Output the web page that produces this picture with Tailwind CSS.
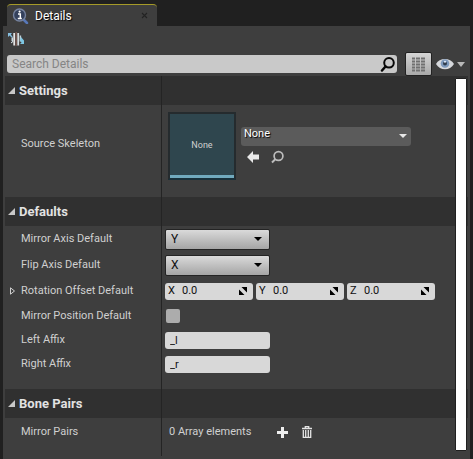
<!DOCTYPE html>
<html lang="en">
<head>
<meta charset="utf-8">
<meta name="viewport" content="width=device-width, initial-scale=1">
<title>Details</title>
<script src="https://cdn.jsdelivr.net/npm/@tailwindcss/browser@4"></script>
</head>
<body class="flex min-h-screen flex-col bg-[#202020] pl-[3px] pr-[3px] pt-1 font-['Roboto',sans-serif] text-xs text-[#d0d0d0]">
<header class="flex px-1">
  <div class="flex h-[22px] w-[150px] items-center rounded-t-sm border-t border-[#a59a28] bg-[#3e3e3e] pl-[5px] pr-2">
    <svg class="h-4 w-[17px]" viewBox="0 0 17 16" aria-hidden="true"><path d="m11 11 4 4" stroke="#5878b8" stroke-width="2.5" stroke-linecap="round"/><circle cx="7.5" cy="7" r="6" fill="#34415c" stroke="#76839f" stroke-width="1.4"/><path d="M6 6h2.3v4.3M5.8 10.5h4" fill="none" stroke="#fff" stroke-width="1.5"/><circle cx="7.6" cy="3.6" r="1.1" fill="#fff"/></svg>
    <h1 class="ml-[6px] flex-1 text-white [text-shadow:1px_1px_1px_#000]">Details</h1>
    <button aria-label="Close tab" class="flex h-4 w-2 items-center"><svg class="h-[7px] w-[7px]" viewBox="0 0 7 7"><path d="m1 1 5 5m0-5-5 5" stroke="#232323" stroke-width="1.1"/></svg></button>
  </div>
</header>
<main class="flex flex-1 flex-col bg-[#3e3e3e] px-[2px]">
  <div class="flex h-[26px] items-center pl-[3px]">
    <button aria-label="Mirror skeleton"><svg class="block h-4 w-[17px]" viewBox="0 0 17 16"><path d="M0 2h4L2.8 3.6l2 2.4L4 7 1.6 4.6 0 6Z" fill="#86bfe0"/><path d="M3.5 7.5 5 6v5l-1.5-1Z" fill="#c9d8df"/><path d="M6.2 2v12.5" stroke="#e6e6e6" stroke-width="1.8"/><path d="M8.2 1v14" stroke="#8d6258" stroke-width="1"/><path d="M10.2 2v12.5" stroke="#d5dde0" stroke-width="1.8"/><path d="M12.4 4.5v6" stroke="#bfd0d8" stroke-width="1.5"/><path d="m13 6 3 3.5V13h-4l1.5-1.5L12 9.5Z" fill="#7ec6e2"/><path d="m3 12 2-1.5" stroke="#dfe9ee"/></svg></button>
  </div>
  <div class="flex h-6 items-center pl-[2px] pr-[3px]">
    <div class="flex h-[18px] min-w-0 flex-1 items-center rounded-[3px] bg-[#c9c9c9] pl-[5px]">
      <input type="search" aria-label="Search Details" placeholder="Search Details" class="h-full min-w-0 flex-1 text-[#222] outline-none placeholder:text-[#858585]">
      <svg class="h-4 w-[18px]" viewBox="0 0 18 16" aria-hidden="true"><circle cx="10" cy="6.8" r="4.8" fill="none" stroke="#080808" stroke-width="2"/><path d="m6.5 10.5-3.5 4" stroke="#080808" stroke-width="2.5" stroke-linecap="round"/></svg>
    </div>
    <button aria-label="Property matrix" class="ml-2 flex h-6 w-[27px] items-center justify-center rounded-[2px] border border-[#222] bg-linear-to-b from-[#d5d5d5] to-[#a9a9a9]"><svg class="h-[15px] w-[15px]" viewBox="0 0 15 15"><path d="M1 1.5h3M1 4.5h3M1 7.5h3M1 10.5h3M1 13.5h3M5 1.5h4M5 4.5h4M5 7.5h4M5 10.5h4M5 13.5h4M10 1.5h4M10 4.5h4M10 7.5h4M10 10.5h4M10 13.5h4" stroke="#707070" stroke-width="1.8"/></svg></button>
    <button aria-label="View options" class="ml-1 flex items-center gap-[3px]"><svg class="h-3 w-[18px]" viewBox="0 0 18 12"><path d="M0 6C3 0 14-1 18 6 14 13 4 13 0 6Z" fill="#d6d8dc"/><circle cx="9" cy="5.5" r="4.3" fill="#7e9abd"/><circle cx="9" cy="5.5" r="2" fill="#303c4d"/><circle cx="9" cy="3.8" r="1" fill="#e8f2ff"/></svg><svg class="h-[5px] w-2" viewBox="0 0 8 5"><path d="M0 0h8L4 5Z" fill="#b8b8b8"/></svg></button>
  </div>
  <div class="relative">
    <section>
      <div class="grid h-[29px] grid-cols-[156px_1fr] bg-[#303030]">
        <h2 class="text-[13px] font-bold text-[#e2e2e2] [text-shadow:1px_1px_1px_#000]"><button aria-expanded="true" class="flex h-full items-center gap-1 pl-[3px]"><svg class="h-[7px] w-[7px]" viewBox="0 0 7 7"><path d="M7 0v7H0Z" fill="#c8c8c8"/></svg>Settings</button></h2>
        <div class="border-l border-[#242424]"></div>
      </div>
      <div class="grid h-[92px] grid-cols-[156px_1fr]">
        <div class="flex items-center pb-[14px] pl-4 text-[11px]"><label for="skeleton">Source Skeleton</label></div>
        <div class="flex items-center border-l border-[#242424] pb-[10px] pl-[6px]">
          <div class="flex h-[68px] w-[68px] items-center justify-center border-2 border-[#252b2e] border-b-[#18303a] bg-[#2f464e]"><div class="flex h-full w-full items-center justify-center border-b-[3px] border-[#71aabe] text-[9px]">None</div></div>
          <div class="ml-[5px] flex flex-col gap-1">
            <div class="relative flex w-[170px] items-center"><select id="skeleton" class="h-[19px] w-full appearance-none rounded-[3px] bg-[#5b5b5b] pb-[3px] pl-[3px] text-[11px] text-white [text-shadow:1px_1px_1px_#000]"><option>None</option></select><svg class="pointer-events-none absolute right-1 h-1 w-2" viewBox="0 0 8 4"><path d="M0 0h8L4 4Z" fill="#e8e8e8"/></svg></div>
            <div class="flex items-center gap-3 pl-[6px]">
              <button aria-label="Use selected asset"><svg class="block h-4 w-3" viewBox="0 0 12 16"><path d="m0 7 6-6v3.5h6v5H6V13Z" fill="#e8e8e8"/></svg></button>
              <button aria-label="Browse to asset"><svg class="block h-4 w-[13px]" viewBox="0 0 13 16"><circle cx="7.5" cy="6" r="4.4" fill="none" stroke="#bcbcbc" stroke-width="1.7"/><path d="m4.5 9-3.5 3.5" stroke="#bcbcbc" stroke-width="2"/></svg></button>
            </div>
          </div>
        </div>
      </div>
    </section>
    <section>
      <div class="grid h-[29px] grid-cols-[156px_1fr] bg-[#303030]">
        <h2 class="text-[13px] font-bold text-[#e2e2e2] [text-shadow:1px_1px_1px_#000]"><button aria-expanded="true" class="flex h-full items-center gap-1 pl-[3px]"><svg class="h-[7px] w-[7px]" viewBox="0 0 7 7"><path d="M7 0v7H0Z" fill="#c8c8c8"/></svg>Defaults</button></h2>
        <div class="border-l border-[#242424]"></div>
      </div>
      <div class="grid h-[26px] grid-cols-[156px_1fr]">
        <label for="mirror" class="flex items-center pl-4 text-[11px]">Mirror Axis Default</label>
        <div class="flex items-center border-l border-[#242424] pl-[3px]"><div class="relative flex w-[105px] items-center"><select id="mirror" class="h-[21px] w-full appearance-none rounded-[2px] border border-[#242424] bg-linear-to-b from-[#dadada] to-[#a5a5a5] pl-[5px] text-[#101010]"><option>Y</option><option>X</option><option>Z</option></select><svg class="pointer-events-none absolute right-2 h-1 w-2" viewBox="0 0 8 4"><path d="M0 0h8L4 4Z"/></svg></div></div>
      </div>
      <div class="grid h-[26px] grid-cols-[156px_1fr]">
        <label for="flip" class="flex items-center pl-4 text-[11px]">Flip Axis Default</label>
        <div class="flex items-center border-l border-[#242424] pl-[3px]"><div class="relative flex w-[105px] items-center"><select id="flip" class="h-[21px] w-full appearance-none rounded-[2px] border border-[#242424] bg-linear-to-b from-[#dadada] to-[#a5a5a5] pl-[5px] text-[#101010]"><option>X</option><option>Y</option><option>Z</option></select><svg class="pointer-events-none absolute right-2 h-1 w-2" viewBox="0 0 8 4"><path d="M0 0h8L4 4Z"/></svg></div></div>
      </div>
      <div class="grid h-[26px] grid-cols-[156px_1fr]">
        <div class="flex items-center gap-[6px] pl-[5px] text-[11px]"><button aria-label="Expand rotation offset" aria-expanded="false"><svg class="block h-2 w-[5px]" viewBox="0 0 5 8"><path d="M.5.8v6.4L4.5 4Z" fill="none" stroke="#d0d0d0"/></svg></button><span>Rotation Offset Default</span></div>
        <div class="flex items-center gap-[3px] border-l border-[#242424] pl-[3px] text-[11px] text-[#101010]">
          <label class="flex h-[17px] w-22 items-center rounded-[3px] bg-[#d8d8d8] pl-[3px] pr-[6px]"><span class="w-[14px]">X</span><input type="text" value="0.0" class="min-w-0 flex-1 outline-none"><svg class="h-2 w-2" viewBox="0 0 8 8"><path d="M2.5 0H8v5.5ZM0 2.5V8h5.5Z"/></svg></label>
          <label class="flex h-[17px] w-22 items-center rounded-[3px] bg-[#d8d8d8] pl-[3px] pr-[6px]"><span class="w-[14px]">Y</span><input type="text" value="0.0" class="min-w-0 flex-1 outline-none"><svg class="h-2 w-2" viewBox="0 0 8 8"><path d="M2.5 0H8v5.5ZM0 2.5V8h5.5Z"/></svg></label>
          <label class="flex h-[17px] w-22 items-center rounded-[3px] bg-[#d8d8d8] pl-[3px] pr-[6px]"><span class="w-[14px]">Z</span><input type="text" value="0.0" class="min-w-0 flex-1 outline-none"><svg class="h-2 w-2" viewBox="0 0 8 8"><path d="M2.5 0H8v5.5ZM0 2.5V8h5.5Z"/></svg></label>
        </div>
      </div>
      <div class="grid h-6 grid-cols-[156px_1fr]">
        <label for="position" class="flex items-center pl-4 text-[11px]">Mirror Position Default</label>
        <div class="flex items-center border-l border-[#242424] pl-1"><input id="position" type="checkbox" class="h-[14px] w-[14px] appearance-none rounded-[2px] bg-[#acacac] checked:bg-[#e0a030]"></div>
      </div>
      <div class="grid h-6 grid-cols-[156px_1fr]">
        <label for="left" class="flex items-center pl-4 text-[11px]">Left Affix</label>
        <div class="flex items-center border-l border-[#242424] pl-[3px]"><input id="left" type="text" value="_l" class="h-[17px] w-[105px] rounded-[3px] bg-[#d8d8d8] pl-[5px] text-[11px] text-[#101010]"></div>
      </div>
      <div class="grid h-[37px] grid-cols-[156px_1fr]">
        <label for="right" class="flex items-center pb-[13px] pl-4 text-[11px]">Right Affix</label>
        <div class="flex items-center border-l border-[#242424] pb-[13px] pl-[3px]"><input id="right" type="text" value="_r" class="h-[17px] w-[105px] rounded-[3px] bg-[#d8d8d8] pl-[5px] text-[11px] text-[#101010]"></div>
      </div>
    </section>
    <section>
      <div class="grid h-[29px] grid-cols-[156px_1fr] bg-[#303030]">
        <h2 class="text-[13px] font-bold text-[#e2e2e2] [text-shadow:1px_1px_1px_#000]"><button aria-expanded="true" class="flex h-full items-center gap-1 pl-[3px]"><svg class="h-[7px] w-[7px]" viewBox="0 0 7 7"><path d="M7 0v7H0Z" fill="#c8c8c8"/></svg>Bone Pairs</button></h2>
        <div class="border-l border-[#242424]"></div>
      </div>
      <div class="grid h-[38px] grid-cols-[156px_1fr]">
        <div class="flex items-center pb-[10px] pl-4 text-[11px]">Mirror Pairs</div>
        <div class="flex items-center border-l border-[#242424] pb-[10px] pl-[7px] text-[11px]"><span class="w-[108px]">0 Array elements</span>
          <button aria-label="Add element"><svg class="block h-[11px] w-[11px]" viewBox="0 0 11 11"><path d="M5.5 0v11M0 5.5h11" stroke="#eee" stroke-width="3"/></svg></button>
          <button aria-label="Delete all elements" class="ml-[14px]"><svg class="block h-3 w-[10px]" viewBox="0 0 10 12"><path d="M0 2.5h10M3.3 2V.7h3.4V2M1.3 4v7.3h7.4V4M3.7 4v7M6.3 4v7" fill="none" stroke="#e4e4e4" stroke-width="1.3"/></svg></button>
        </div>
      </div>
    </section>
    <div class="absolute bottom-[5px] right-px top-[2px] w-3 rounded-[1px] border border-[#202020] bg-white" aria-hidden="true"></div>
  </div>
</main>
</body>
</html>
